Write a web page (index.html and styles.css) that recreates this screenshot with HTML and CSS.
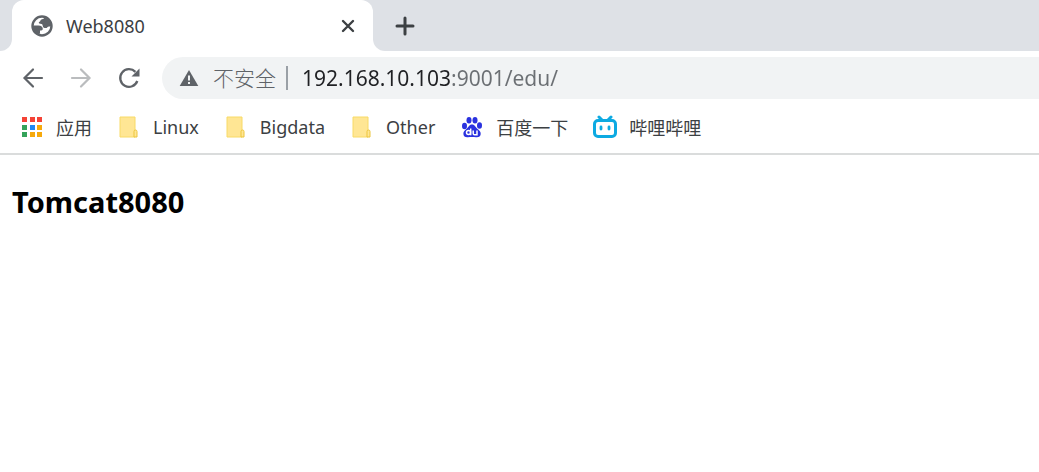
FILE: index.html
```
<!DOCTYPE html>
<html lang="zh-CN">
<head>
<meta charset="UTF-8">
<meta name="viewport" content="width=device-width, initial-scale=1.0">
<title>Web8080</title>
<link rel="stylesheet" href="styles.css">
</head>
<body>
<header>
  <div class="tab-strip">
    <div class="strip-start"></div>
    <div class="tab-holder">
      <div class="tab">
        <svg class="tab-icon" viewBox="0 0 24 24" aria-hidden="true">
          <circle cx="12" cy="12" r="9.500" fill="#fff" stroke="#5f6368" stroke-width="2.400"/>
          <path fill="#5f6368" d="M14.500 2.500c-.2 1.800-.8 2.600-2.500 2.800-1.700.2-1.200 1.900-2.500 2.500-1.300.5-.7 2 .8 2 1.900 0 2.400.8 2.500 2.500.1 1.400 1.500 1.800 3 1.800 1.500 0 1.600-1.700 3.200-1.700H21c.3-4.500-2.300-8.400-6.500-9.900z"/>
          <path fill="#5f6368" d="M2.800 11.500h5.700c2.800 0 4.300 1.300 4.300 3.200 0 1.500-1.200 1.900-2.800 1.900v2.100c0 1.300-.9 1.300-2.500 1.300C4.300 18.300 2.500 15.300 2.800 11.500z"/>
        </svg>
        <span class="tab-title">Web8080</span>
        <button class="icon-btn" aria-label="关闭">
          <svg width="16" height="16" viewBox="0 0 16 16"><path d="M3 3l10 10M13 3L3 13" stroke="#3c4043" stroke-width="2.400" stroke-linecap="round"/></svg>
        </button>
      </div>
    </div>
    <div class="strip-end">
      <button class="icon-btn" aria-label="新标签页">
        <svg width="20" height="20" viewBox="0 0 20 20"><path d="M10 2v16M2 10h16" stroke="#3c4043" stroke-width="3" stroke-linecap="round"/></svg>
      </button>
    </div>
  </div>

  <div class="toolbar">
    <button class="icon-btn" aria-label="后退">
      <svg width="24" height="24" viewBox="0 0 24 24"><path d="M21 12H4M12 3.500L3.500 12l8.500 8.500" fill="none" stroke="#5f6368" stroke-width="2.200" stroke-linecap="round"/></svg>
    </button>
    <button class="icon-btn" aria-label="前进" disabled>
      <svg width="24" height="24" viewBox="0 0 24 24"><path d="M3 12h17M12 3.500l8.500 8.500-8.500 8.500" fill="none" stroke="#babcbe" stroke-width="2.200" stroke-linecap="round"/></svg>
    </button>
    <button class="icon-btn" aria-label="重新加载">
      <svg width="24" height="24" viewBox="0 0 24 24"><path d="M20.300 15a8.800 8.800 0 1 1-1.900-9.100" fill="none" stroke="#5f6368" stroke-width="2.300"/><path d="M22.500 2.500v8h-8z" fill="#5f6368"/></svg>
    </button>
    <div class="omnibox">
      <svg width="20" height="18" viewBox="0 0 20 18" aria-hidden="true"><path d="M10 1L19.300 17H.7z" fill="#5f6368"/><path d="M10 6.500v5M10 13v2" stroke="#f1f3f4" stroke-width="2"/></svg>
      <label class="security" for="url">不安全</label>
      <input class="url" id="url" type="text" value="192.168.10.103:9001/edu/">
    </div>
  </div>

  <nav class="bookmarks">
    <a href="#">
      <svg class="bookmark-icon" viewBox="0 0 24 24" aria-hidden="true">
        <path fill="#f44336" d="M2 2h5v5H2zM10 2h5v5h-5zM17 2h5v5h-5z"/>
        <path fill="#34a35a" d="M2 10h5v5H2zM2 17h5v5H2z"/>
        <path fill="#1e88f5" d="M10 10h5v5h-5z"/>
        <path fill="#f6a90c" d="M17 10h5v5h-5zM10 17h5v5h-5zM17 17h5v5h-5z"/>
      </svg>
      <span>应用</span>
    </a>
    <a href="#">
      <svg class="bookmark-icon" viewBox="0 0 24 24" aria-hidden="true"><path d="M3 2h15v20H3z" fill="#ffe694" stroke="#f8da66"/><path d="M17 22v-5.500a1.500 1.500 0 0 1 3 0V22z" fill="#ffe694" stroke="#ecc53c"/></svg>
      <span>Linux</span>
    </a>
    <a href="#">
      <svg class="bookmark-icon" viewBox="0 0 24 24" aria-hidden="true"><path d="M3 2h15v20H3z" fill="#ffe694" stroke="#f8da66"/><path d="M17 22v-5.500a1.500 1.500 0 0 1 3 0V22z" fill="#ffe694" stroke="#ecc53c"/></svg>
      <span>Bigdata</span>
    </a>
    <a href="#">
      <svg class="bookmark-icon" viewBox="0 0 24 24" aria-hidden="true"><path d="M3 2h15v20H3z" fill="#ffe694" stroke="#f8da66"/><path d="M17 22v-5.500a1.500 1.500 0 0 1 3 0V22z" fill="#ffe694" stroke="#ecc53c"/></svg>
      <span>Other</span>
    </a>
    <a href="#">
      <svg class="bookmark-icon" viewBox="0 0 24 24" aria-hidden="true">
        <g fill="#2a32df">
          <ellipse cx="4.500" cy="11" rx="2.500" ry="3.200"/>
          <ellipse cx="9" cy="5.300" rx="2.500" ry="3.300"/>
          <ellipse cx="15" cy="5.300" rx="2.500" ry="3.300"/>
          <ellipse cx="19.500" cy="10.500" rx="2.500" ry="3.200"/>
          <path d="M12 9.500c-3 0-3.300 2.600-5.300 4.200C4.500 15.400 3.200 16.800 3.400 19c.2 2.400 1.800 3.500 4.600 3.200 2.700-.3 5.300-.3 8 0 2.800.3 4.500-.8 4.700-3.200.2-2.200-1.200-3.600-3.400-5.300C15.300 12.100 15 9.500 12 9.500z"/>
        </g>
        <g fill="none" stroke="#fff" stroke-width="1.500">
          <circle cx="8.500" cy="17.500" r="2"/>
          <path d="M10.700 13.500v6.800M13.200 15.500v3q0 1.300 1.300 1.300h2.500v-4.300"/>
        </g>
      </svg>
      <span>百度一下</span>
    </a>
    <a href="#">
      <svg class="bookmark-icon" viewBox="0 0 24 24" aria-hidden="true">
        <g fill="none" stroke="#0daae2" stroke-width="3" stroke-linecap="round">
          <rect x="1.500" y="5.500" width="21" height="16" rx="3.500"/>
          <path d="M6 2l3 3M18 2l-3 3"/>
        </g>
        <path d="M8 12v2M16 12v2" stroke="#0daae2" stroke-width="2.800" stroke-linecap="round"/>
      </svg>
      <span>哔哩哔哩</span>
    </a>
  </nav>
</header>

<main>
  <h1>Tomcat8080</h1>
</main>
</body>
</html>
```
FILE: styles.css
```
body {
  margin: 0;
  background-color: #fff;
  color: #3c4043;
  font-family: "Noto Sans", "Noto Sans CJK SC", sans-serif;
  font-size: 18px;
}
.tab-strip {
  display: flex;
  height: 51px;
}
.strip-start {
  width: 12px;
  background-color: #dee1e6;
  border-bottom-right-radius: 12px;
}
.tab-holder {
  flex: 0 1 361px;
  background-color: #dee1e6;
  background-image: linear-gradient(transparent 50%, #fff 50%);
}
.tab {
  display: flex;
  align-items: center;
  gap: 12px;
  height: 100%;
  box-sizing: border-box;
  padding: 0 17px 0 18px;
  background-color: #fff;
  border-radius: 12px 12px 0 0;
}
.tab-icon {
  width: 24px;
  height: 24px;
}
.tab-title {
  flex: 1;
}
.strip-end {
  flex: 1;
  display: flex;
  align-items: center;
  padding-left: 22px;
  background-color: #dee1e6;
  border-bottom-left-radius: 12px;
}
.icon-btn {
  display: flex;
  padding: 0;
  border: none;
  background: none;
  cursor: pointer;
}
.toolbar {
  display: flex;
  align-items: center;
  gap: 24px;
  padding: 6px 0 3px 21px;
}
.omnibox {
  flex: 1;
  display: flex;
  align-items: center;
  height: 42px;
  margin-left: -3px;
  padding-left: 17px;
  background-color: #f1f3f4;
  border-radius: 21px 0 0 21px;
  font-size: 21px;
}
.security {
  margin-left: 14px;
  padding-right: 10px;
  border-right: 2px solid #9aa0a6;
  color: #5f6368;
  font-weight: 300;
  line-height: 24px;
}
.url {
  flex: 1;
  margin-left: 14px;
  padding: 0;
  border: none;
  outline: none;
  /* host is dark, port and path are grey */
  background: linear-gradient(to right, #202124 150px, #6b6f73 150px);
  -webkit-background-clip: text;
  background-clip: text;
  color: transparent;
  caret-color: #202124;
  font-family: inherit;
  font-size: 21px;
}
.bookmarks {
  display: flex;
  align-items: center;
  gap: 25px;
  height: 49px;
  padding: 0 0 2px 20px;
  border-bottom: 2px solid #dadcdc;
}
.bookmarks a {
  display: flex;
  align-items: center;
  gap: 12px;
  color: #3c4043;
  text-decoration: none;
  white-space: nowrap;
}
.bookmark-icon {
  width: 24px;
  height: 24px;
}
main {
  padding: 27px 12px;
}
h1 {
  margin: 0;
  color: #000;
  font-size: 29px;
  line-height: 40px;
}
```
